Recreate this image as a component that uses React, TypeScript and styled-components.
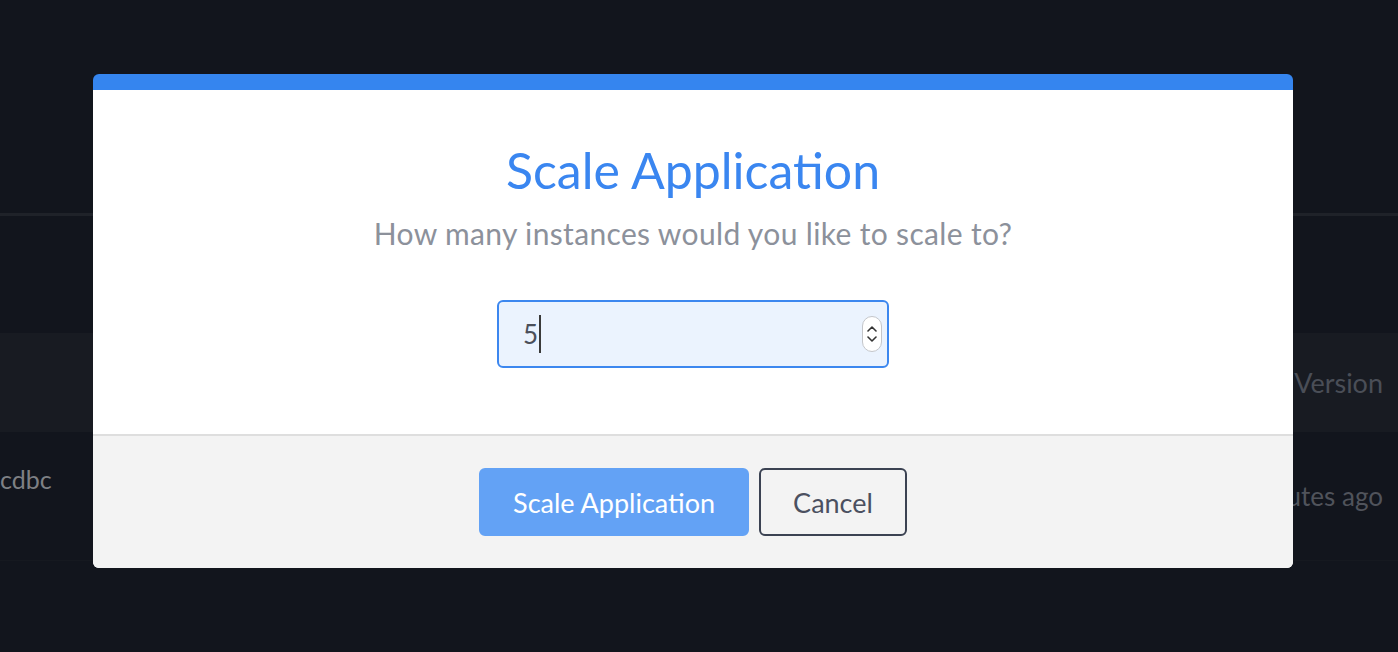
import React from "react";
import styled, { createGlobalStyle } from "styled-components";

const Global = createGlobalStyle`
  html, body { margin: 0; padding: 0; }
  body {
    background: #12151d;
    font-family: Lato, "Liberation Sans", sans-serif;
    width: 1398px;
    height: 652px;
    overflow: hidden;
  }
  #root { height: 652px; }
`;

const Page = styled.div`
  position: relative;
  height: 652px;
  background: #12151d;
  display: flex;
  flex-direction: column;
`;

const Header = styled.header`
  height: 213px;
  border-bottom: 3px solid #1f2229;
  flex-shrink: 0;
`;

const Table = styled.div`
  margin-top: 117px;
  display: flex;
  flex-direction: column;
`;

const HeadRow = styled.div`
  height: 99px;
  background: #181b22;
  display: flex;
  align-items: center;
  justify-content: space-between;
  padding: 0 15px 0 0;
  font-size: 27px;
  color: #4a4e57;
`;

const BodyRow = styled.div`
  height: 128px;
  border-bottom: 1px solid #161920;
  display: flex;
  justify-content: space-between;
  padding: 0 15px 0 0;
  font-size: 26px;
`;

const Cell = styled.div<{ $offset: number; $color: string }>`
  padding-top: ${(p) => p.$offset}px;
  color: ${(p) => p.$color};
`;

const NameCell = styled(Cell)`
  font-size: 25px;
`;

const Overlay = styled.div`
  position: absolute;
  inset: 0;
  padding: 74px 0 0 93px;
`;

const Modal = styled.div`
  width: 1200px;
  border-radius: 6px;
  overflow: hidden;
  background: #ffffff;
  border-top: 16px solid #3585ef;
  display: flex;
  flex-direction: column;
`;

const Body = styled.div`
  padding: 51px 0 66px;
  display: flex;
  flex-direction: column;
  align-items: center;
`;

const Title = styled.h2`
  margin: 0;
  font-size: 50px;
  line-height: 58px;
  font-weight: 400;
  color: #3a86f0;
`;

const Subtitle = styled.p`
  margin: 18px 0 0;
  font-size: 30px;
  letter-spacing: 0.35px;
  line-height: 32px;
  color: #8c919b;
`;

const Field = styled.div`
  margin-top: 51px;
  width: 392px;
  height: 68px;
  box-sizing: border-box;
  border: 2px solid #3c87ef;
  border-radius: 6px;
  background: #ebf3fe;
  display: flex;
  align-items: center;
  padding: 0 5px 0 24px;
`;

const Value = styled.span`
  font-size: 26px;
  color: #4a4f5a;
  line-height: 1;
`;

const Caret = styled.span`
  width: 2px;
  height: 38px;
  margin-left: 1px;
  background: #3a3a3a;
  flex-shrink: 0;
`;

const Spacer = styled.span`
  flex: 1;
`;

const Spinner = styled.div`
  width: 20px;
  height: 36px;
  box-sizing: border-box;
  border: 1px solid #c4c6ca;
  border-radius: 10px;
  background: #ffffff;
  display: flex;
  flex-direction: column;
  align-items: center;
  justify-content: center;
  gap: 4px;
`;

const Footer = styled.div`
  border-top: 2px solid #dedede;
  background: #f3f3f3;
  padding: 32px 0;
  display: flex;
  justify-content: center;
  gap: 10px;
`;

const Button = styled.button<{ $primary?: boolean }>`
  height: 68px;
  box-sizing: border-box;
  padding: 0 32px;
  border-radius: 6px;
  font-family: inherit;
  font-size: 27px;
  border: 2px solid ${(p) => (p.$primary ? "#63a2f5" : "#3b4252")};
  background: ${(p) => (p.$primary ? "#63a2f5" : "transparent")};
  color: ${(p) => (p.$primary ? "#ffffff" : "#4b5060")};
  cursor: pointer;
`;

const Chevron = ({ up }: { up?: boolean }) => (
  <svg width="10" height="6" viewBox="0 0 10 6" fill="none">
    <path
      d={up ? "M1 5 L5 1 L9 5" : "M1 1 L5 5 L9 1"}
      stroke="#333"
      strokeWidth="1.6"
      strokeLinecap="round"
      strokeLinejoin="round"
    />
  </svg>
);

export default function App() {
  return (
    <>
      <Global />
      <Page>
        <Header />
        <Table>
          <HeadRow>
            <span />
            <span>Version</span>
          </HeadRow>
          <BodyRow>
            <NameCell $offset={32} $color="#7e8084">cdbc</NameCell>
            <Cell $offset={48} $color="#50535b">2 minutes ago</Cell>
          </BodyRow>
        </Table>
        <Overlay>
          <Modal role="dialog">
            <Body>
              <Title>Scale Application</Title>
              <Subtitle>How many instances would you like to scale to?</Subtitle>
              <Field role="spinbutton" aria-valuenow={5}>
                <Value>5</Value>
                <Caret />
                <Spacer />
                <Spinner>
                  <Chevron up />
                  <Chevron />
                </Spinner>
              </Field>
            </Body>
            <Footer>
              <Button $primary>Scale Application</Button>
              <Button>Cancel</Button>
            </Footer>
          </Modal>
        </Overlay>
      </Page>
    </>
  );
}
